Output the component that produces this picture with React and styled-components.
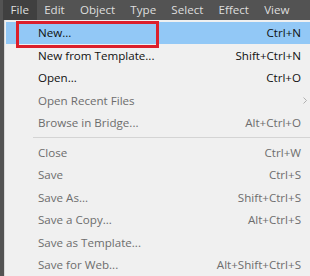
import React from "react";
import styled, { createGlobalStyle } from "styled-components";

const GlobalStyle = createGlobalStyle`
  html, body {
    margin: 0;
    padding: 0;
    background: #535353;
  }
  body {
    font-family: "Open Sans", "Noto Sans", sans-serif;
  }
`;

const topMenus = ["File", "Edit", "Object", "Type", "Select", "Effect", "View"];

const items = [
  { label: "New...", key: "Ctrl+N", active: true, highlight: true },
  { label: "New from Template...", key: "Shift+Ctrl+N", active: true },
  { label: "Open...", key: "Ctrl+O", active: true },
  { label: "Open Recent Files", sub: true },
  { label: "Browse in Bridge...", key: "Alt+Ctrl+O" },
  { sep: true },
  { label: "Close", key: "Ctrl+W" },
  { label: "Save", key: "Ctrl+S" },
  { label: "Save As...", key: "Shift+Ctrl+S" },
  { label: "Save a Copy...", key: "Alt+Ctrl+S" },
  { label: "Save as Template..." },
  { label: "Save for Web...", key: "Alt+Shift+Ctrl+S" },
];

const App = () => {
  return (
    <>
      <GlobalStyle />
      <Window>
        <MenuBar>
          {topMenus.map((m, i) => (
            <TopItem key={m} open={i === 0}>
              {m}
            </TopItem>
          ))}
        </MenuBar>
        <Dropdown>
          {items.map((it, i) =>
            it.sep ? (
              <Separator key={i} />
            ) : (
              <Row key={i} highlight={it.highlight} active={it.active}>
                <Label>{it.label}</Label>
                {it.key && <Shortcut>{it.key}</Shortcut>}
                {it.sub && (
                  <Arrow viewBox="0 0 4 7">
                    <path d="M0.5 0.5 L3.5 3.5 L0.5 6.5" fill="none" stroke="#a8a8a8" strokeWidth="0.9" />
                  </Arrow>
                )}
                {it.highlight && <Callout />}
              </Row>
            )
          )}
        </Dropdown>
      </Window>
    </>
  );
};

const Window = styled.div`
  width: 310px;
  height: 276px;
  overflow: hidden;
  background: #535353;
  display: flex;
  flex-direction: column;
`;

const MenuBar = styled.div`
  height: 20px;
  display: flex;
  align-items: stretch;
  padding-left: 3px;
  background: #535353;
`;

const TopItem = styled.div`
  padding: 0 7.6px;
  display: flex;
  align-items: center;
  font-size: 11.6px;
  color: #dedede;
  background: ${(p) => (p.open ? "#404040" : "transparent")};
`;

const Dropdown = styled.div`
  flex: 1;
  margin-left: 4px;
  background: #f0f0f0;
  border-left: 1px solid #d8d8d8;
  padding-top: 2px;
  display: flex;
  flex-direction: column;
`;

const Row = styled.div`
  position: relative;
  height: 22.5px;
  flex-shrink: 0;
  display: flex;
  align-items: center;
  padding: 0 9px 0 32px;
  margin-left: 1px;
  font-size: 11.6px;
  color: ${(p) => (p.active ? "#101010" : "#6d6d6d")};
  background: ${(p) => (p.highlight ? "#92c8f6" : "transparent")};
`;

const Label = styled.span`
  flex: 1;
  white-space: nowrap;
`;

const Shortcut = styled.span`
  white-space: nowrap;
`;

const Arrow = styled.svg`
  width: 4px;
  height: 7px;
  margin-right: -6px;
`;

const Separator = styled.div`
  height: 7px;
  flex-shrink: 0;
  margin-left: 28px;
  position: relative;
  &::after {
    content: "";
    position: absolute;
    left: 0;
    right: 0;
    top: 3px;
    border-top: 1px solid #d4d4d4;
  }
`;

const Callout = styled.div`
  position: absolute;
  left: 10px;
  top: -1px;
  width: 143px;
  height: 27px;
  box-sizing: border-box;
  border: 3px solid #dc1f2b;
  pointer-events: none;
`;

export default App;
